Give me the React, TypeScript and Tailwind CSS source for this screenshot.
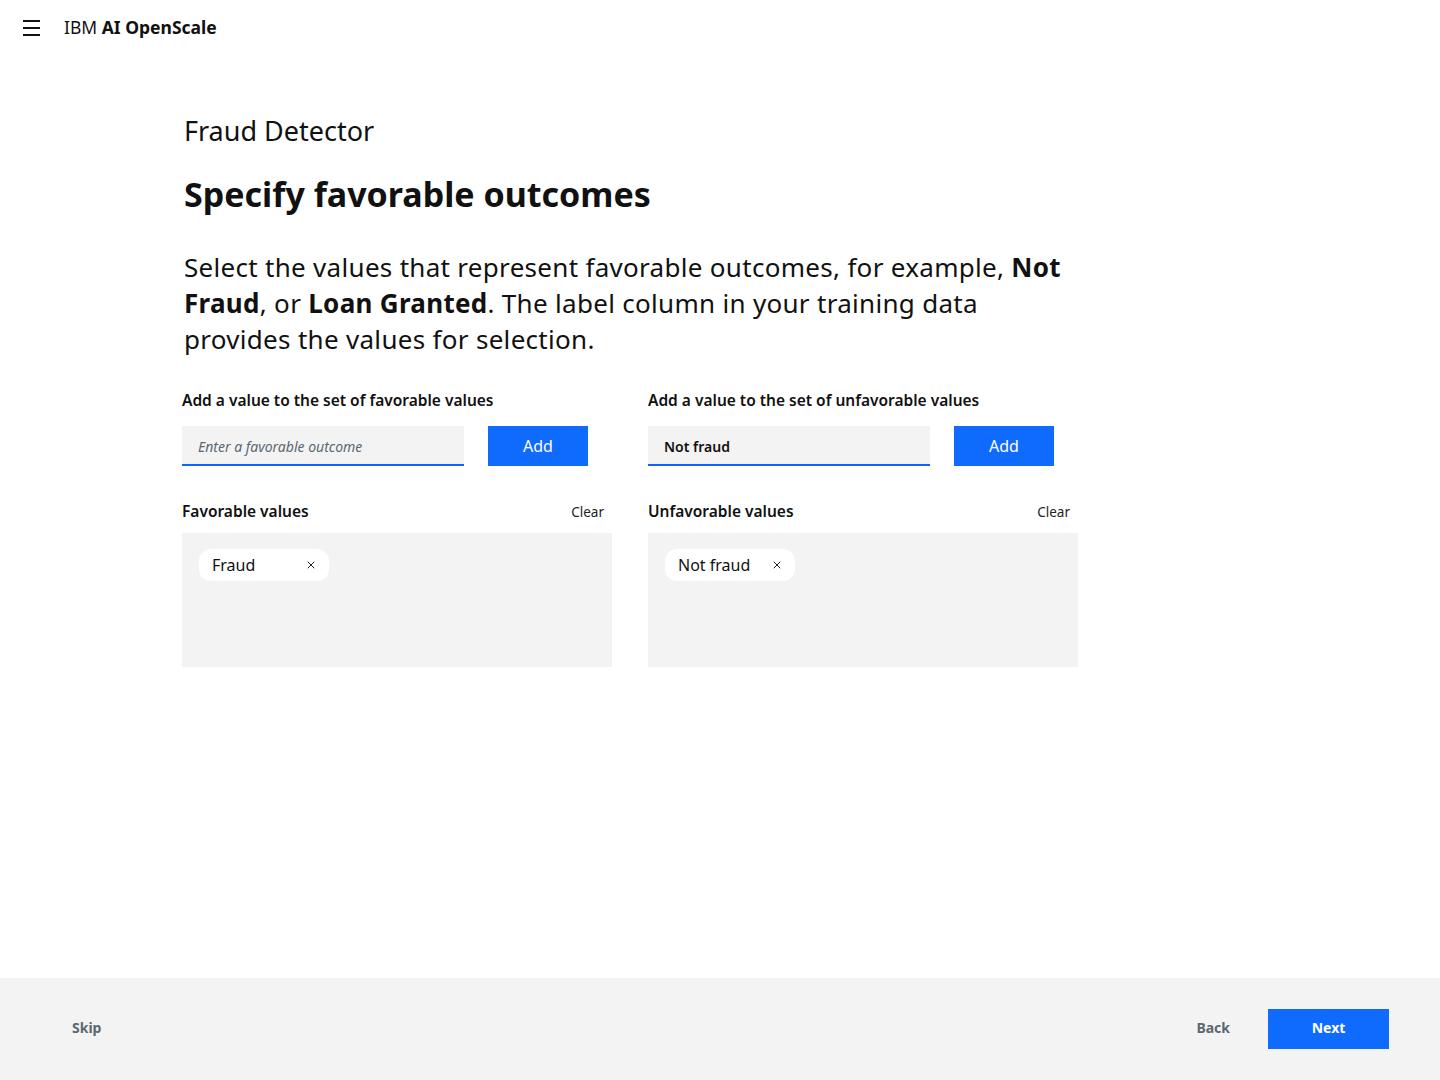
import { X } from "lucide-react";

const font = { fontFamily: '"Noto Sans", "Open Sans", Arial, sans-serif' };

function AddField({ label, placeholder, value }: { label: string; placeholder: string; value?: string }) {
  return (
    <div className="flex flex-col">
      <label className="text-[15.5px] font-semibold leading-5 text-[#111] mb-4">{label}</label>
      <div className="flex items-center gap-6">
        <input
          readOnly
          value={value ?? ""}
          placeholder={placeholder}
          className="w-[282px] h-10 bg-[#f3f3f3] border-b-2 border-[#0f62fe] px-4 pt-[2px] text-[14px] font-semibold text-[#111] placeholder:italic placeholder:font-normal placeholder:text-[#5a6872] outline-none"
          style={font}
        />
        <button className="w-[100px] h-10 bg-[#0f6afe] text-white text-[16px]">Add</button>
      </div>
    </div>
  );
}

function ValueBox({ title, chip }: { title: string; chip: string }) {
  return (
    <div className="flex flex-col">
      <div className="flex items-center justify-between pr-2 mb-[11px] h-[20px]">
        <span className="text-[15.5px] font-semibold text-[#111]">{title}</span>
        <span className="text-[13.5px] text-[#222]">Clear</span>
      </div>
      <div className="h-[134px] bg-[#f3f3f3] pt-4 px-[17px]">
        <div className="inline-flex items-center h-8 w-[130px] rounded-[12px] bg-white pl-[13px] pr-3 justify-between">
          <span className="text-[16px] text-[#111]">{chip}</span>
          <X className="w-3 h-3 text-[#222]" strokeWidth={2} />
        </div>
      </div>
    </div>
  );
}

export default function App() {
  return (
    <div className="min-h-[1080px] flex flex-col bg-white text-[#111]" style={font}>
      <header className="h-14 flex items-center">
        <div className="w-16 flex justify-center">
          <svg width="18" height="16" viewBox="0 0 18 16">
            <rect x="0" y="0" width="17" height="2" fill="#111" />
            <rect x="0" y="7" width="17" height="2" fill="#111" />
            <rect x="0" y="14" width="17" height="2" fill="#111" />
          </svg>
        </div>
        <span className="text-[17.5px] text-[#111] -mt-[2px]">
          IBM <span className="font-bold">AI OpenScale</span>
        </span>
      </header>

      <main className="flex-1 pl-[182px] pt-[57px]">
        <h2 className="ml-[2px] text-[27px] leading-9 font-normal">Fraud Detector</h2>
        <h1 className="ml-[2px] mt-[23px] text-[34px] leading-[44px] font-bold">Specify favorable outcomes</h1>
        <p className="ml-[2px] mt-[33px] w-[890px] text-[26px] tracking-[0.3px] leading-9">
          Select the values that represent favorable outcomes, for example, <b>Not Fraud</b>, or{" "}
          <b>Loan Granted</b>. The label column in your training data provides the values for selection.
        </p>

        <div className="mt-[33px] grid grid-cols-[430px_430px] gap-x-9">
          <AddField label="Add a value to the set of favorable values" placeholder="Enter a favorable outcome" />
          <AddField label="Add a value to the set of unfavorable values" placeholder="Enter an unfavorable outcome" value="Not fraud" />
        </div>

        <div className="mt-9 grid grid-cols-[430px_430px] gap-x-9">
          <ValueBox title="Favorable values" chip="Fraud" />
          <ValueBox title="Unfavorable values" chip="Not fraud" />
        </div>
      </main>

      <footer className="h-[102px] bg-[#f3f3f3] flex items-center pl-[72px] pr-[51px]">
        <span className="text-[14px] font-bold text-[#5a6872] -mt-[3px]">Skip</span>
        <div className="ml-auto flex items-center gap-[38px]">
          <span className="text-[14px] font-bold text-[#5a6872] -mt-[3px]">Back</span>
          <button className="w-[121px] h-10 bg-[#0f6afe] text-white text-[14px] font-bold pb-[3px]">Next</button>
        </div>
      </footer>
    </div>
  );
}
